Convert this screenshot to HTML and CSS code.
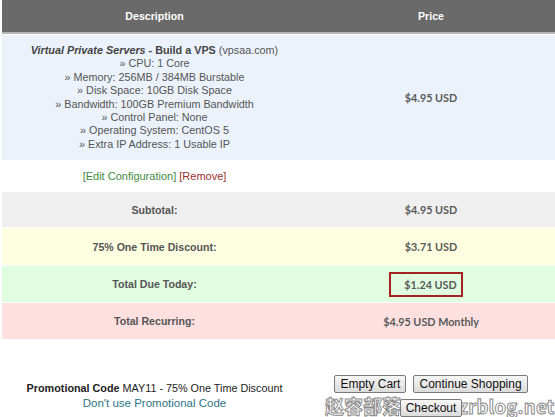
FILE: index.html
```html
<!DOCTYPE html>
<html lang="en">
<head>
  <meta charset="UTF-8">
  <title>Shopping Cart</title>
  <link rel="stylesheet" href="styles.css">
</head>
<body>
  <!-- Cart Table -->
  <div class="cart">
    <div class="row head">
      <div class="cell">Description</div>
      <div class="cell">Price</div>
    </div>

    <div class="row item">
      <div class="cell desc">
        <strong><em>Virtual Private Servers</em> - Build a VPS</strong> (vpsaa.com)<br>
        &raquo; CPU: 1 Core<br>
        &raquo; Memory: 256MB / 384MB Burstable<br>
        &raquo; Disk Space: 10GB Disk Space<br>
        &raquo; Bandwidth: 100GB Premium Bandwidth<br>
        &raquo; Control Panel: None<br>
        &raquo; Operating System: CentOS 5<br>
        &raquo; Extra IP Address: 1 Usable IP
      </div>
      <div class="cell price">$4.95 USD</div>
    </div>

    <div class="row actions">
      <div class="cell">
        <a href="#" class="edit">[Edit Configuration]</a> <a href="#" class="remove">[Remove]</a>
      </div>
      <div class="cell"></div>
    </div>

    <div class="row sum subtotal">
      <div class="cell label">Subtotal:</div>
      <div class="cell price">$4.95 USD</div>
    </div>
    <div class="row sum discount">
      <div class="cell label">75% One Time Discount:</div>
      <div class="cell price">$3.71 USD</div>
    </div>
    <div class="row sum today">
      <div class="cell label">Total Due Today:</div>
      <div class="cell price"><span class="boxed">$1.24 USD</span></div>
    </div>
    <div class="row sum recurring">
      <div class="cell label">Total Recurring:</div>
      <div class="cell price">$4.95 USD Monthly</div>
    </div>
  </div>

  <!-- Promo + Buttons -->
  <div class="cart-footer">
    <div class="promo">
      <span class="promo-text"><strong>Promotional Code</strong> MAY11 - 75% One Time Discount</span><br>
      <a href="#" class="promo-link">Don't use Promotional Code</a>
    </div>
    <div class="buttons">
      <button>Empty Cart</button>
      <button>Continue Shopping</button><br>
      <button class="checkout">Checkout</button>
    </div>
    <div class="watermark">赵容部落 <span class="wm-latin">www.zrblog.net</span></div>
  </div>
</body>
</html>
```

FILE: styles.css
```css
/* General Styles */
body {
  font-family: "Liberation Sans", Arial, sans-serif;
  font-size: 11px;
  color: #444;
  background-color: #fff;
  margin: 0;
}

a {
  text-decoration: none;
}

/* Cart Table */
.cart {
  margin-left: 2px;
  display: flex;
  flex-direction: column;
  gap: 1px;
}

.row {
  display: grid;
  grid-template-columns: 305px 1fr;
  align-items: center;
  text-align: center;
}

.head {
  background-color: #6a6a6a;
  border-bottom: 2px solid #b4b4b4;
  height: 32px;
  color: #fff;
  font-weight: bold;
  font-size: 10.6px;
}

.item {
  background-color: #ebf2fc;
  padding: 9px 0;
  line-height: 13.4px;
}

.item .desc {
  color: #555;
  font-size: 10.8px;
}

.item .desc strong {
  color: #444;
}

.price {
  font-family: Lato, "Liberation Sans", sans-serif;
  font-weight: bold;
  font-size: 10.8px;
  color: #5a5a5a;
}

.actions {
  height: 30px;
}

.edit {
  color: #3f8a3f;
}

.remove {
  color: #9a3030;
}

.label {
  font-weight: bold;
  font-size: 10.6px;
  color: #555;
}

.subtotal {
  background-color: #efefef;
  height: 35px;
}

.discount {
  background-color: #fefee0;
  height: 37px;
}

.today {
  background-color: #e1fde0;
  height: 36px;
}

.recurring {
  background-color: #fee0e0;
  height: 36px;
}

.boxed {
  display: inline-block;
  border: 2px solid #a32222;
  padding: 3px 4px 3px 13px;
  margin-right: 10px;
  line-height: 15px;
}

/* Footer */
.cart-footer {
  margin-left: 2px;
  display: grid;
  grid-template-columns: 305px 1fr;
  text-align: center;
  position: relative;
  height: 78px;
}

.promo {
  padding-top: 42px;
  color: #222;
  font-size: 11.5px;
  line-height: 15px;
}

.promo-text {
  font-size: 10.8px;
}

.promo-link {
  color: #2d7484;
}

.buttons {
  padding-top: 36px;
  line-height: 24px;
}

.buttons button {
  font-family: "Liberation Sans", Arial, sans-serif;
  font-size: 12px;
  color: #111;
  height: 18px;
  padding: 0 5px;
  margin: 0 2px;
  border: 1px solid #7a7a7a;
  border-radius: 2px;
  background: linear-gradient(#f6f6f6, #dcdcdc);
  vertical-align: top;
}

.buttons .checkout {
  position: relative;
  z-index: 2;
}

.watermark {
  position: absolute;
  left: 323px;
  top: 57px;
  font-family: "Noto Sans CJK SC", "DejaVu Sans", sans-serif;
  font-size: 19px;
  font-weight: bold;
  line-height: 20px;
  color: #fff;
  -webkit-text-stroke: 1px #8a8a8a;
  white-space: nowrap;
  z-index: 1;
}

.wm-latin {
  font-size: 18.5px;
  letter-spacing: 0.2px;
}
```
